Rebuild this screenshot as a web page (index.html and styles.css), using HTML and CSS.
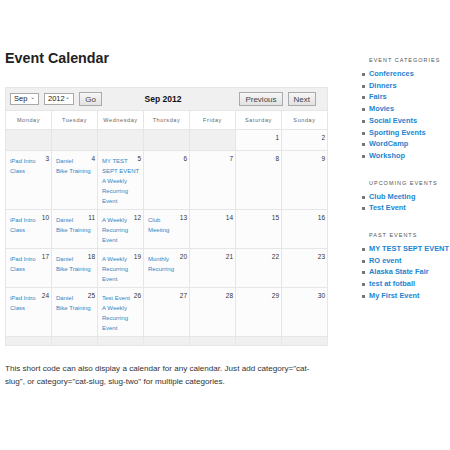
FILE: index.html
```html
<!DOCTYPE html>
<html lang="en">
<head>
    <meta charset="UTF-8">
    <meta name="viewport" content="width=device-width, initial-scale=1.0">
    <title>Event Calendar</title>
    <link rel="stylesheet" href="styles.css">
</head>
<body>
    <div class="page">
        <div class="content">
            <h1>Event Calendar</h1>
            <table class="calendar">
                <tr class="toolbar">
                    <td colspan="7">
                        <div class="bar">
                            <div class="picker">
                                <span class="select sel-month">Sep <i>&#8964;</i></span>
                                <span class="select sel-year">2012 <i>&#8964;</i></span>
                                <span class="btn">Go</span>
                            </div>
                            <div class="month">Sep 2012</div>
                            <div class="nav">
                                <span class="btn">Previous</span>
                                <span class="btn">Next</span>
                            </div>
                        </div>
                    </td>
                </tr>
                <tr class="days">
                    <th>Monday</th><th>Tuesday</th><th>Wednesday</th><th>Thursday</th><th>Friday</th><th>Saturday</th><th>Sunday</th>
                </tr>
                <tr class="week first">
                    <td class="pad"></td><td class="pad"></td><td class="pad"></td><td class="pad"></td><td class="pad"></td>
                    <td><span class="num">1</span></td>
                    <td><span class="num">2</span></td>
                </tr>
                <tr class="week">
                    <td><span class="num">3</span><a>iPad Intro<br>Class</a></td>
                    <td><span class="num">4</span><a>Daniel<br>Bike Training</a></td>
                    <td><span class="num">5</span><a>MY TEST<br>SEPT EVENT</a><a>A Weekly<br>Recurring<br>Event</a></td>
                    <td><span class="num">6</span></td>
                    <td><span class="num">7</span></td>
                    <td><span class="num">8</span></td>
                    <td><span class="num">9</span></td>
                </tr>
                <tr class="week">
                    <td><span class="num">10</span><a>iPad Intro<br>Class</a></td>
                    <td><span class="num">11</span><a>Daniel<br>Bike Training</a></td>
                    <td><span class="num">12</span><a>A Weekly<br>Recurring<br>Event</a></td>
                    <td><span class="num">13</span><a>Club<br>Meeting</a></td>
                    <td><span class="num">14</span></td>
                    <td><span class="num">15</span></td>
                    <td><span class="num">16</span></td>
                </tr>
                <tr class="week">
                    <td><span class="num">17</span><a>iPad Intro<br>Class</a></td>
                    <td><span class="num">18</span><a>Daniel<br>Bike Training</a></td>
                    <td><span class="num">19</span><a>A Weekly<br>Recurring<br>Event</a></td>
                    <td><span class="num">20</span><a>Monthly<br>Recurring</a></td>
                    <td><span class="num">21</span></td>
                    <td><span class="num">22</span></td>
                    <td><span class="num">23</span></td>
                </tr>
                <tr class="week">
                    <td><span class="num">24</span><a>iPad Intro<br>Class</a></td>
                    <td><span class="num">25</span><a>Daniel<br>Bike Training</a></td>
                    <td><span class="num">26</span><a>Test Event</a><a>A Weekly<br>Recurring<br>Event</a></td>
                    <td><span class="num">27</span></td>
                    <td><span class="num">28</span></td>
                    <td><span class="num">29</span></td>
                    <td><span class="num">30</span></td>
                </tr>
                <tr class="foot">
                    <td></td><td></td><td></td><td></td><td></td><td></td><td></td>
                </tr>
            </table>
            <p class="note">This short code can also display a calendar for any calendar. Just add category="cat-slug", or category="cat-slug, slug-two" for multiple categories.</p>
        </div>

        <div class="sidebar">
            <div class="widget">
                <h3>Event Categories</h3>
                <ul>
                    <li><a>Conferences</a></li>
                    <li><a>Dinners</a></li>
                    <li><a>Fairs</a></li>
                    <li><a>Movies</a></li>
                    <li><a>Social Events</a></li>
                    <li><a>Sporting Events</a></li>
                    <li><a>WordCamp</a></li>
                    <li><a>Workshop</a></li>
                </ul>
            </div>
            <div class="widget">
                <h3>Upcoming Events</h3>
                <ul>
                    <li><a>Club Meeting</a></li>
                    <li><a>Test Event</a></li>
                </ul>
            </div>
            <div class="widget">
                <h3>Past Events</h3>
                <ul>
                    <li><a>MY TEST SEPT EVENT</a></li>
                    <li><a>RO event</a></li>
                    <li><a>Alaska State Fair</a></li>
                    <li><a>test at fotball</a></li>
                    <li><a>My First Event</a></li>
                </ul>
            </div>
        </div>
    </div>
</body>
</html>
```

FILE: styles.css
```css
body {
    font-family: "Liberation Sans", Arial, sans-serif;
    background-color: #fff;
    color: #333;
    margin: 0;
    padding: 0;
}
.page {
    display: flex;
    padding: 0 0 0 5px;
}
.content {
    width: 322px;
    flex-shrink: 0;
}
h1 {
    font-size: 14.3px;
    color: #222;
    margin: 50px 0 20px;
    line-height: 17px;
}
.calendar {
    width: 323px;
    border-collapse: collapse;
    table-layout: fixed;
    background-color: #fcfcfc;
}
.calendar td,
.calendar th {
    border: 1px solid #e6e6e6;
    padding: 0;
}
.toolbar td {
    background-color: #f0f0f0;
    height: 22px;
    padding: 0 11px 0 4px;
}
.bar {
    display: grid;
    grid-template-columns: 1fr auto 1fr;
    align-items: center;
}
.picker,
.nav {
    display: flex;
    gap: 5px;
    align-items: center;
}
.nav {
    justify-self: end;
}
.select {
    display: flex;
    justify-content: space-between;
    box-sizing: border-box;
    font-size: 7.5px;
    color: #222;
    background: #fff;
    border: 1px solid #a9a9a9;
    padding: 0 3px;
    height: 12px;
    line-height: 10px;
}
.sel-month { width: 29px; }
.sel-year { width: 30px; }
.select i {
    font-style: normal;
    font-size: 6px;
    color: #555;
    line-height: 7px;
}
.btn {
    box-sizing: border-box;
    font-size: 8px;
    color: #444;
    background: linear-gradient(#f6f6f6, #e2e2e2);
    border: 1px solid #aaa;
    padding: 1px 5px;
    height: 14px;
    line-height: 11px;
}
.picker .btn {
    width: 23px;
    text-align: center;
    padding: 1px 0;
}
.month {
    font-size: 8.5px;
    font-weight: bold;
    color: #111;
}
.days th {
    font-weight: normal;
    font-size: 5.5px;
    letter-spacing: 0.6px;
    color: #666;
    height: 18px;
    background: #fff;
}
.week td {
    vertical-align: top;
    padding: 5px 2px 3px 4px;
    font-size: 6px;
    line-height: 10px;
    background: #fcfcfc;
}
.week td.pad {
    background-color: #f0f0f0;
}
.first td {
    height: 12px;
}
.num {
    float: right;
    font-size: 6.5px;
    line-height: 6px;
    color: #333;
}
.week a {
    display: block;
    white-space: nowrap;
    color: #2f86c4;
}
.foot td {
    height: 8px;
    background-color: #f0f0f0;
}
.note {
    font-size: 8.1px;
    line-height: 13px;
    color: #333;
    margin: 16px 0 0;
}
.sidebar {
    margin-left: 33px;
    padding-top: 57px;
}
.widget {
    margin-bottom: 18px;
}
.widget h3 {
    font-size: 5.5px;
    font-weight: normal;
    letter-spacing: 1px;
    text-transform: uppercase;
    color: #555;
    margin: 0 0 5px 9px;
}
.widget ul {
    list-style-type: none;
    padding: 0;
    margin: 0;
}
.widget li {
    font-size: 7.4px;
    font-weight: bold;
    line-height: 11.7px;
    white-space: nowrap;
    position: relative;
    padding-left: 9px;
}
.widget li::before {
    content: "";
    position: absolute;
    left: 2px;
    top: 5px;
    width: 3px;
    height: 3px;
    background: #777;
}
.widget li a {
    color: #1e84d0;
}
```
